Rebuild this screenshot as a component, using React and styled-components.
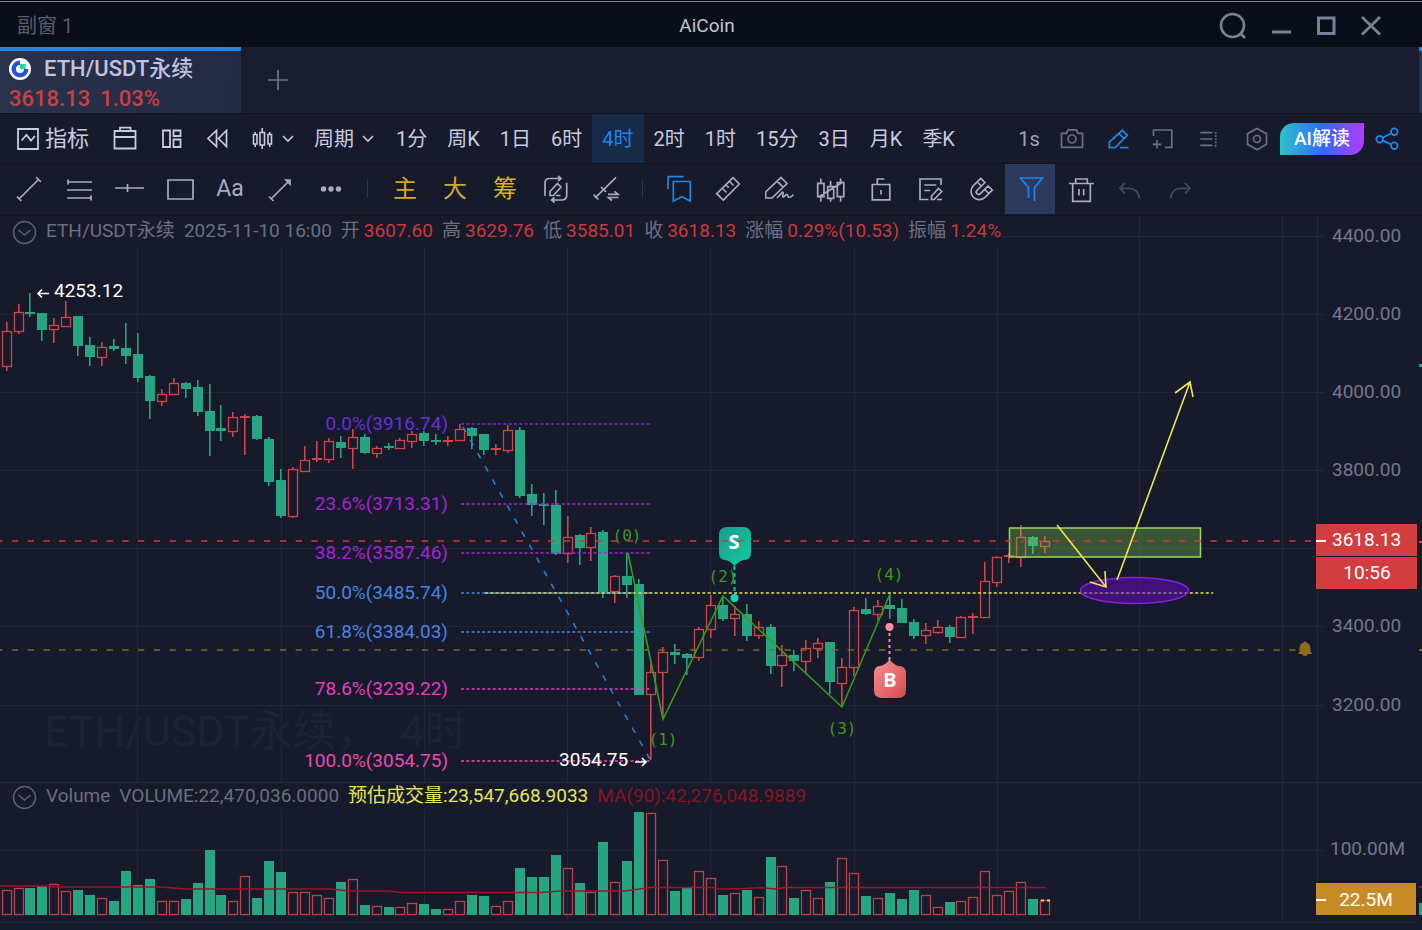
import React from 'react';
import styled, { createGlobalStyle } from 'styled-components';

const GlobalStyle = createGlobalStyle`
  * {
    box-sizing: border-box;
  }
  body {
    margin: 0;
    background: #171a2b;
    font-family: Roboto, "Noto Sans CJK SC", sans-serif;
  }
  button {
    font-family: inherit;
    line-height: 24px;
    border: 0;
    padding: 0;
    background: none;
    cursor: pointer;
  }
`;

const Page = styled.div`
  min-height: 100vh;
  background: #171a2b;
  color: #c9cbe0;
`;

const TitleBar = styled.header`
  display: grid;
  grid-template-columns: 1fr auto 1fr;
  align-items: center;
  height: 47px;
  padding: 4px 25px 0 17px;
  background: #0a0e19;
  border-top: 1px solid #000;
  box-shadow: inset 0 1px 0 #858896;
`;

const WindowName = styled.span`
  font-size: 20px;
  line-height: 24px;
  color: #5a5d6b;
`;

const AppName = styled.h1`
  margin: 0;
  font-size: 19px;
  line-height: 24px;
  font-weight: 400;
  color: #c3c5d4;
`;

const WindowButtons = styled.div`
  display: flex;
  justify-content: flex-end;
  margin-right: 4px;
`;

const WindowButton = styled.button`
  display: flex;
  align-items: center;
  justify-content: center;
  width: ${p => (p.$wide ? 50 : 45)}px;
  height: 40px;
  color: #7c7f98;
`;

const TabBar = styled.nav`
  display: flex;
  height: 66px;
  background: #191d2f;
`;

const Tab = styled.button`
  display: flex;
  flex-direction: column;
  justify-content: flex-end;
  gap: 2px;
  width: 241px;
  padding: 0 9px;
  border-top: 4px solid #1e86e5;
  background: linear-gradient(100deg, #29334b, #222a43);
  text-align: left;
`;

const TabName = styled.span`
  display: flex;
  align-items: center;
  gap: 13px;
  font-size: 22px;
  line-height: 28px;
  font-weight: 500;
  color: #c0c4e0;
`;

const TabQuote = styled.span`
  display: flex;
  gap: 10px;
  font-size: 22px;
  line-height: 28px;
  font-weight: 500;
  color: #c94045;
`;

const AddTab = styled.button`
  display: flex;
  align-items: center;
  justify-content: center;
  width: 74px;
  color: #6f7386;
`;

const NextWindow = styled.div`
  width: 3px;
  margin-left: auto;
  border-top: 4px solid #1e86e5;
  background: #263049;
`;

const Toolbar = styled.div`
  display: flex;
  height: ${p => p.$height}px;
  border-top: 1px solid #10131f;
  padding: ${p => p.$pad};
`;

const Tool = styled.button`
  display: flex;
  align-items: center;
  justify-content: center;
  flex: none;
  width: ${p => p.$width || 50}px;
  font-size: ${p => p.$size || 22}px;
  color: ${p => p.$color || '#a9acbd'};
  background: ${p => p.$bg || 'none'};
`;

const MenuTool = styled.button`
  display: flex;
  align-items: center;
  flex: none;
  gap: ${p => p.$gap}px;
  padding: ${p => p.$pad};
  font-size: ${p => p.$size || 20}px;
  color: #c9cbe0;
`;

const Period = styled.button`
  flex: none;
  padding: 0 10px;
  font-size: 20px;
  color: ${p => (p.$on ? '#1e86f0' : '#c9cbe0')};
  background: ${p => (p.$on ? '#172a47' : 'none')};
`;

const RightTools = styled.div`
  display: flex;
  align-items: stretch;
  margin-left: auto;
`;

const AiButton = styled.button`
  align-self: center;
  width: 84px;
  height: 32px;
  margin-left: 1px;
  border-radius: 14px 0;
  background: linear-gradient(90deg, #2cc3c8, #2f6bff 50%, #b13bff);
  font-size: 19px;
  font-weight: 500;
  color: #fff;
`;

const Divider = styled.span`
  width: 1px;
  height: 18px;
  margin: 0 12px;
  align-self: center;
  background: #2f3447;
`;

const Pane = styled.section`
  position: relative;
  display: flex;
  border-top: 1px solid ${p => p.$line};
`;

const Plot = styled.svg`
  display: block;
  flex: 1;
  min-width: 0;
`;

const Axis = styled.svg`
  display: block;
  flex: none;
  width: 106px;
  font-size: 19px;
`;

const Legend = styled.div`
  position: absolute;
  top: 0;
  left: 0;
  display: flex;
  align-items: center;
  gap: 9px;
  height: ${p => p.$height}px;
  padding-left: 12px;
  background: #171a2b;
  font-size: 19px;
  line-height: 24px;
  white-space: nowrap;
  color: #6b6f80;

  svg {
    margin-top: 2px;
  }
`;

const Quote = styled.span`
  display: flex;
  gap: 4px;
`;

const LegendValue = styled.span`
  color: ${p => p.$color || '#c9393e'};
`;

const Icon = ({ size = 30, x = 0, w = 2, children }) => (
  <svg
    width={size}
    height={size}
    viewBox={`${x} 0 ${size} ${size}`}
    fill="none"
    stroke="currentColor"
    strokeWidth={w}
    aria-hidden="true"
  >
    {children}
  </svg>
);

const Chevron = () => (
  <svg width="14" height="8" viewBox="0 0 14 8" fill="none" stroke="currentColor" strokeWidth="1.6" aria-hidden="true">
    <path d="M2 1l5 5 5-5" />
  </svg>
);

const Fold = () => (
  <svg width="25" height="25" viewBox="0 0 25 25" fill="none" stroke="#5c6071" strokeWidth="1.5" aria-hidden="true">
    <circle cx="12.5" cy="12.5" r="11" />
    <path d="M6.5 10l6 5 6-5" />
  </svg>
);

const EthLogo = () => (
  <svg width="22" height="22" viewBox="0 0 22 22" aria-hidden="true">
    <circle cx="11" cy="11" r="11" fill="#fff" />
    <path d="M11 2.5a8.5 8.5 0 1 0 8.5 8.5h-4.500a4 4 0 1 1-4-4z" fill="#2a4fd8" />
    <rect x="11" y="6" width="5.5" height="5" fill="#1fd6a0" />
  </svg>
);

const periods = ['1分', '周K', '1日', '6时', '4时', '2时', '1时', '15分', '3日', '月K', '季K'];

const drawTools = [
  { name: '线段', d: 'M5 25L25 5M3 22.7l4.3 4.3M22 3l5 5' },
  { name: '平行线', d: 'M3 8h25M3 16h25M3 24h25M4 5.5v5M27 21.5v5' },
  { name: '水平线', d: 'M1 14h29M13.5 10v8' },
  { name: '矩形', d: 'M4 6h25v19H4z' },
  { name: '文字', text: 'Aa', size: 23 },
  { name: '箭头', d: 'M7 25L25 7M5 22.5l4.5 4.5M22 6h4v4z' },
  { name: '更多', dots: true },
];

const markTools = [
  { name: '主', text: '主', color: '#d9a520', size: 24 },
  { name: '大', text: '大', color: '#c9a53c', size: 24 },
  { name: '筹', text: '筹', color: '#d6b41e', size: 24 },
  { name: '切换画线', d: 'M6 22V9q0-4.5 4.5-4.5H21M19 2l3 2.5-3 2.5M27.7 8.700V21q0 5-5 5H12.500M15.500 23.500l-3 2.500 3 2.500M11 21.500v-4l7.500-8 3.500 3.500-7.500 8.500zM17 21.500h4.500' },
  { name: '画线同步', d: 'M6 24L27 3.300M4.500 20.500l5 5M12 13l5 5M19 20.300h10l-3.500-3M29.500 23.500H19.500l3.500 3' },
];

const chartTools = [
  { name: '书签', d: 'M4 15.300V2.700h15.500M9.300 7.500h17V27l-8.500-4.300L9.300 27z', color: '#1e86e5' },
  { name: '测量', d: 'M19 3.700l6.300 6.300L9.300 26l-6.600-6.300zM15.500 7.500l4 4M12 11l2.700 2.700M8.500 14.500l4 4' },
  { name: '画笔', d: 'M17 3.500l6 6L8 24H1.700v-6zM13.300 7.300l6 6M13 24l5.500-6c2 0-1 4.500.5 5s2.500-3 4-2.500c1.300.5.6 3 2.300 3s2.200-1.500 4.200-2.700' },
  { name: 'K线形态', d: 'M3.700 9.300h6.300v13.400H3.700zM6.800 4.500v4.800M6.800 22.700v5M13.700 12.700h6v11.600h-6zM16.600 7v5.700M16.600 24.300v3.400M23.300 8.500h6.500v14.200h-6.500zM26.600 4.500v4M26.600 22.700v5M4.500 23L29 8' },
  { name: '锁定', d: 'M8.300 10.500h17.500v15.300H8.300zM13.300 10.500V5h7M17 16v4.500' },
  { name: '笔记', d: 'M27 11V5H6v20.500h8.500M10.300 11h12M10.300 16.500h6M17.500 25.500V22l7-7.500 3.200 3-7.500 8zM23 25.500h5' },
  { name: '磁吸', d: 'M16.700 4.300L9 12a8.300 8.300 0 0 0 11.700 11.700l7.600-7.500-4.200-4.200-7.700 7.700a2.400 2.400 0 0 1-3.400-3.400L20.900 8.500zM13.300 8l4 4M20.800 15.500l4 4' },
  { name: '筛选', d: 'M14.500 24V13.500L6.500 4h22l-8 9.500V27', color: '#1e86e5', bg: '#2c3a5e' },
  { name: '删除', d: 'M5 9.500h25M11.700 9.500V5h11.600v4.500M8.700 9.500v17.800h17.600V9.500M15 15v6.500M19.700 15v6.500' },
  { name: '撤销', d: 'M11 9l-5 5.300 5 5M6 14.300h9q9 0 10.500 10', color: '#454a5b' },
  { name: '重做', d: 'M21 9l5 5.300-5 5M26 14.300h-9q-9 0-10.500 10', color: '#454a5b' },
];

// [up, wick top, body top, body bottom, wick bottom, volume top]
const candles = [
  [1, 322, 331, 366, 371, 890], [1, 304, 312, 331, 334, 888], [0, 293, 312, 314, 317, 888],
  [0, 313, 313, 330, 341, 886], [1, 318, 325, 329, 343, 884], [1, 301, 317, 326, 326, 891],
  [0, 316, 316, 346, 356, 890], [0, 337, 345, 357, 366, 895], [1, 342, 347, 357, 366, 898],
  [0, 339, 346, 349, 351, 901], [0, 323, 348, 356, 364, 871], [0, 333, 354, 378, 382, 885],
  [0, 375, 376, 401, 419, 879], [1, 389, 394, 401, 406, 901], [1, 378, 383, 394, 394, 901],
  [0, 382, 383, 389, 398, 899], [0, 380, 387, 412, 416, 883], [0, 384, 411, 431, 456, 850],
  [0, 405, 428, 431, 441, 895], [1, 412, 417, 431, 437, 901], [1, 414, 416, 418, 455, 876],
  [0, 415, 416, 439, 440, 898], [0, 437, 439, 482, 486, 861], [0, 469, 480, 516, 518, 872],
  [1, 467, 469, 516, 518, 892], [1, 446, 460, 471, 472, 892], [1, 441, 458, 460, 462, 895],
  [1, 438, 441, 459, 463, 898], [0, 436, 442, 448, 458, 882], [1, 429, 437, 448, 469, 879],
  [0, 434, 437, 453, 454, 905], [1, 446, 448, 453, 458, 906], [0, 443, 446, 448, 450, 907],
  [1, 438, 440, 448, 448, 907], [1, 431, 434, 441, 448, 903], [0, 431, 433, 441, 446, 904],
  [0, 434, 440, 442, 445, 909], [1, 436, 440, 442, 446, 909], [1, 424, 429, 440, 440, 901],
  [0, 427, 428, 436, 449, 895], [0, 434, 434, 450, 455, 896], [1, 444, 448, 450, 455, 906],
  [1, 425, 430, 450, 453, 901], [0, 427, 430, 496, 498, 868], [0, 484, 494, 505, 516, 877],
  [0, 493, 504, 506, 525, 877], [0, 490, 505, 554, 555, 855], [1, 516, 537, 553, 563, 868],
  [0, 534, 535, 548, 565, 883], [1, 527, 533, 547, 561, 892], [0, 530, 532, 592, 598, 842],
  [1, 575, 576, 591, 603, 882], [0, 553, 576, 585, 598, 861], [0, 579, 584, 695, 695, 812],
  [1, 664, 672, 694, 760, 813], [1, 647, 652, 672, 718, 860], [0, 644, 652, 655, 664, 891],
  [0, 653, 654, 658, 675, 888], [1, 627, 629, 657, 661, 871], [1, 595, 605, 629, 638, 878],
  [0, 596, 605, 619, 621, 895], [1, 606, 614, 618, 636, 893], [0, 604, 614, 636, 641, 890],
  [1, 621, 627, 635, 639, 897], [0, 624, 627, 666, 674, 857], [1, 645, 655, 665, 687, 866],
  [0, 650, 655, 661, 671, 898], [1, 640, 648, 661, 673, 890], [1, 638, 643, 648, 658, 898],
  [0, 642, 642, 682, 694, 882], [1, 658, 667, 683, 707, 858], [1, 607, 610, 667, 676, 873],
  [0, 598, 609, 614, 615, 896], [1, 600, 606, 614, 620, 898], [0, 594, 605, 609, 619, 893],
  [0, 599, 608, 623, 623, 899], [0, 619, 622, 636, 639, 890], [1, 623, 630, 635, 644, 895],
  [1, 620, 627, 632, 634, 907], [0, 625, 627, 637, 643, 902], [1, 616, 617, 637, 638, 901],
  [1, 613, 616, 618, 634, 897], [1, 562, 581, 617, 617, 871], [1, 556, 557, 582, 587, 895],
  [1, 553, 555, 557, 563, 891], [1, 525, 537, 557, 567, 882], [0, 536, 537, 546, 554, 899],
  [1, 536, 541, 546, 553, 900],
];

const candleX = i => Math.round(6.6 + i * 11.936);
const RED = '#cf4448';
const GREEN = '#25a582';

const gridX = [137, 281, 424, 567, 710, 854, 997, 1139, 1282];
const prices = [
  ['4400.00', 236], ['4200.00', 314], ['4000.00', 392], ['3800.00', 470],
  ['', 548], ['3400.00', 626], ['3200.00', 705],
];

const fibs = [
  ['0.0%(3916.74)', 424, '#6430dc'],
  ['23.6%(3713.31)', 504, '#a423d8'],
  ['38.2%(3587.46)', 553, '#a423d8'],
  ['50.0%(3485.74)', 593, '#4186e0'],
  ['61.8%(3384.03)', 632, '#4a82e6'],
  ['78.6%(3239.22)', 689, '#e23fc0'],
  ['100.0%(3054.75)', 761, '#e84bb4'],
];

const waves = [['(0)', 627, 541], ['(1)', 663, 745], ['(2)', 723, 582], ['(3)', 842, 734], ['(4)', 889, 580]];

const Grid = ({ ys, height }) => (
  <g stroke="#212538" shapeRendering="crispEdges">
    {gridX.map(x => <line key={x} x1={x} x2={x} y1="0" y2={height} />)}
    {ys.map(y => <line key={y} x1="0" x2="100%" y1={y} y2={y} />)}
  </g>
);

function Candle({ x, bar }) {
  const [up, high, top, bottom, low] = bar;
  const color = up ? RED : GREEN;
  const thin = bottom - top < 4;
  return (
    <g fill={color}>
      <rect x={x - 1} y={high} width="1.6" height={top - high} />
      <rect x={x - 1} y={bottom} width="1.6" height={low - bottom} />
      {up && !thin ? (
        <rect x={x - 4.5} y={top + 0.5} width="9" height={bottom - top} fill="none" stroke={color} strokeWidth="1.3" />
      ) : (
        <rect x={x - 5} y={top} width="10" height={bottom - top} />
      )}
    </g>
  );
}

function PricePane() {
  return (
    <Pane $line="#10131f">
      <Plot height="566">
        <defs>
          <linearGradient id="sell" x1="0" y1="0" x2="1" y2="1">
            <stop offset="0" stopColor="#1a9c8c" />
            <stop offset="1" stopColor="#12cba4" />
          </linearGradient>
          <linearGradient id="buy" x1="0" y1="0" x2="1" y2="1">
            <stop offset="0" stopColor="#f49090" />
            <stop offset="1" stopColor="#d84a50" />
          </linearGradient>
        </defs>
        <g transform="translate(0 -216)">
          <Grid ys={prices.map(p => p[1])} height="782" />
          <text x="44" y="746" fontSize="43" fill="#1c2134" style={{ whiteSpace: 'pre' }}>ETH/USDT永续，  4时</text>
          {fibs.map(([label, y, color]) => (
            <text key={label} x="448" y={y + 6} fontSize="19" textAnchor="end" fill={color}>{label}</text>
          ))}
          {candles.map((bar, i) => <Candle key={i} x={candleX(i)} bar={bar} />)}
          {fibs.map(([label, y, color]) => (
            <line key={label} x1="461" x2="652" y1={y} y2={y} stroke={color} strokeWidth="1.5" strokeDasharray="3 2.3" />
          ))}
          <line x1="463" y1="427" x2="651" y2="761" stroke="#2186e0" strokeWidth="1.5" strokeDasharray="6 9" />
          <line x1="485" x2="1213" y1="593" y2="593" stroke="#e6e65a" strokeWidth="1.7" strokeDasharray="3 2.3" />

          <path d="M628 553L663 719L723 596L842 707L890 594" fill="none" stroke="#3a9a1c" strokeWidth="1.6" />
          <g fontFamily='"DejaVu Sans Mono", monospace' fontSize="16" fill="#3a9a1c" textAnchor="middle">
            {waves.map(([label, x, y]) => <text key={label} x={x} y={y}>{label}</text>)}
          </g>

          <path d="M734.5 566v32" stroke="#15c4a6" strokeWidth="2" strokeDasharray="4 3" />
          <circle cx="734.5" cy="598" r="4" fill="#10d6c2" />
          <path d="M727 527h16q8 0 8 8v17q0 8-7 8-4 0-9.5 6-5-6-9.5-6-6 0-6-8v-17q0-8 8-8z" fill="url(#sell)" />
          <path d="M889.5 627v34" stroke="#f490a4" strokeWidth="2" strokeDasharray="3 3" />
          <circle cx="889.5" cy="627" r="4" fill="#f78fa4" />
          <path d="M882 698h16q8 0 8-8v-16q0-8-7-8-4 0-9.5-6.5-5 6.5-9.5 6.5-6 0-6 8v16q0 8 8 8z" fill="url(#buy)" />

          <rect x="1009.5" y="528" width="191" height="29" fill="#82cd50" fillOpacity="0.33" stroke="#9ed45c" strokeWidth="1.5" />
          <ellipse cx="1134.5" cy="590.5" rx="54" ry="13" fill="#6a0ac8" fillOpacity="0.5" stroke="#8420e0" strokeWidth="1.5" />
          <line x1="-4" x2="100%" y1="541" y2="541" stroke="#c93a3c" strokeWidth="1.5" strokeDasharray="6.4 9.37" />
          <line x1="-4" x2="1297" y1="650" y2="650" stroke="#80681f" strokeWidth="1.5" strokeDasharray="6.4 9.37" />
          <path d="M1305 641l1.500 1.500q4 1.500 4 6v3l1.500 2.500h-4q-.5 2-3 2t-3-2h-4l1.500-2.500v-3q0-4.500 4-6z" fill="#8e6b1e" />

          <g fill="none" stroke="#ece64e" strokeWidth="1.6">
            <path d="M1057 525L1106 587M1090 582l16 5-1-16" />
            <path d="M1117 580L1190 382M1175 393l15-11 3 15" />
          </g>

          <g fill="#fff" fontSize="19">
            <text x="54" y="297">4253.12</text>
            <text x="559" y="766">3054.75</text>
          </g>
          <path d="M49 293.5H38M42 289.5l-4 4 4 4M635 762h11M642 758l4 4-4 4" fill="none" stroke="#fff" strokeWidth="1.6" />
          <g fill="#fff" fontFamily='"Noto Sans", sans-serif' fontSize="20" fontWeight="700" textAnchor="middle">
            <text x="734" y="549">S</text>
            <text x="890" y="687">B</text>
          </g>
        </g>
      </Plot>
      <Axis height="566">
        <line x1="1" x2="1" y1="0" y2="566" stroke="#212538" shapeRendering="crispEdges" />
        <g transform="translate(0 -216)">
          {prices.map(([label, y]) => (
            <g key={y}>
              <line x1="0" x2="8" y1={y} y2={y} stroke="#212538" shapeRendering="crispEdges" />
              <text x="16" y={y + 6} fill="#73778c">{label}</text>
            </g>
          ))}
          <rect y="524" width="101" height="32" fill="#d23e40" />
          <rect y="557" width="101" height="32" fill="#d23e40" />
          <rect y="540" width="10" height="2" fill="#fff" />
          <text x="16" y="546" fill="#fff">3618.13</text>
          <text x="51" y="579" fill="#fff" textAnchor="middle">10:56</text>
          <rect x="103" y="364" width="3" height="3" fill={GREEN} />
          <rect x="103" y="541" width="3" height="2" fill={RED} />
          <rect x="103" y="649" width="3" height="2" fill="#80681f" />
        </g>
      </Axis>
      <Legend $height={30}>
        <Fold />
        <span>ETH/USDT永续</span>
        <span>2025-11-10 16:00</span>
        <Quote>开<LegendValue>3607.60</LegendValue></Quote>
        <Quote>高<LegendValue>3629.76</LegendValue></Quote>
        <Quote>低<LegendValue>3585.01</LegendValue></Quote>
        <Quote>收<LegendValue>3618.13</LegendValue></Quote>
        <Quote>涨幅<LegendValue>0.29%(10.53)</LegendValue></Quote>
        <Quote>振幅<LegendValue>1.24%</LegendValue></Quote>
      </Legend>
    </Pane>
  );
}

function VolumePane() {
  return (
    <Pane $line="#23283a">
      <Plot height="147">
        <g transform="translate(0 -783)">
          <Grid ys={[850, 922]} height="922" />
          {candles.map(([up, , , , , top], i) => {
            const x = candleX(i) - 5;
            return up ? (
              <rect key={i} x={x + 0.5} y={top + 0.5} width="9" height={914 - top} fill="none" stroke="#bd4247" strokeWidth="1.3" />
            ) : (
              <rect key={i} x={x} y={top} width="10" height={915 - top} fill={GREEN} />
            );
          })}
          <path d="M1041 900.5h3M1047 900.5h3" stroke="#f0d070" strokeWidth="2" />
          <path
            d="M0 886H42L58 887H160L185 889H330L350 891H388L402 892.5H540L560 891H625L650 887.5H712L720 889L745 888.5L760 887.5L775 889L785 887.5H1046"
            fill="none"
            stroke="#9c1524"
            strokeWidth="1.6"
          />
        </g>
      </Plot>
      <Axis height="147">
        <line x1="1" x2="1" y1="0" y2="139" stroke="#212538" shapeRendering="crispEdges" />
        <line x1="0" x2="101" y1="139" y2="139" stroke="#212538" shapeRendering="crispEdges" />
        <g transform="translate(0 -783)">
          <line x1="0" x2="8" y1="850" y2="850" stroke="#212538" shapeRendering="crispEdges" />
          <text x="14" y="855" fill="#73778c">100.00M</text>
          <rect y="883" width="100" height="32" fill="#c78b26" />
          <rect y="899" width="10" height="2" fill="#fff" />
          <text x="50" y="906" fill="#fff" textAnchor="middle">22.5M</text>
          <rect x="103" y="886" width="3" height="2" fill="#9c1524" />
          <rect x="103" y="903" width="3" height="12" fill={GREEN} />
        </g>
      </Axis>
      <Legend $height={26}>
        <Fold />
        <span>Volume</span>
        <span>VOLUME:22,470,036.0000</span>
        <LegendValue $color="#e6e65a">预估成交量:23,547,668.9033</LegendValue>
        <LegendValue $color="#861423">MA(90):42,276,048.9889</LegendValue>
      </Legend>
    </Pane>
  );
}

const ToolButton = ({ tool }) => (
  <Tool $color={tool.color} $bg={tool.bg} $size={tool.size} aria-label={tool.name}>
    {tool.text}
    {tool.d && <Icon x={1} w={1.7}><path d={tool.d} /></Icon>}
    {tool.dots && (
      <Icon x={1}>
        <g fill="currentColor" stroke="none">
          <circle cx="9.5" cy="15" r="2.7" />
          <circle cx="17" cy="15" r="2.7" />
          <circle cx="24.5" cy="15" r="2.7" />
        </g>
      </Icon>
    )}
  </Tool>
);

export default function App() {
  return (
    <Page>
      <GlobalStyle />
      <TitleBar>
        <WindowName>副窗 1</WindowName>
        <AppName>AiCoin</AppName>
        <WindowButtons>
          <WindowButton $wide aria-label="搜索">
            <Icon w={2.6}><circle cx="14.5" cy="14.5" r="11.5" /><path d="M22 22l5 5" /></Icon>
          </WindowButton>
          <WindowButton aria-label="最小化"><Icon w={3}><path d="M6 21h19" /></Icon></WindowButton>
          <WindowButton aria-label="最大化"><Icon w={3}><path d="M7.5 7h15.5v15.500H7.500z" /></Icon></WindowButton>
          <WindowButton aria-label="关闭"><Icon w={2.8}><path d="M6 6l18 17.500M24 6L6 23.500" /></Icon></WindowButton>
        </WindowButtons>
      </TitleBar>

      <TabBar>
        <Tab>
          <TabName><EthLogo />ETH/USDT永续</TabName>
          <TabQuote><span>3618.13</span><span>1.03%</span></TabQuote>
        </Tab>
        <AddTab aria-label="新建标签"><Icon size={20} w={1.7}><path d="M10 0v20M0 10h20" /></Icon></AddTab>
        <NextWindow />
      </TabBar>

      <Toolbar $height={50} $pad="0 12px 0 0">
        <MenuTool $gap={6} $pad="0 13px 0 17px" $size={22}>
          <Icon size={22} w={1.8}><path d="M1 1h20v20H1zM4.500 12.500l5-5.500 4.500 5.500 4-4.500" /></Icon>
          指标
        </MenuTool>
        <Tool $width={46} $color="#c9cbe0" aria-label="模板">
          <Icon w={1.8}><path d="M4.500 7h21v17.500h-21zM4.500 13h21M10 7V3.700h10.500V7" /></Icon>
        </Tool>
        <Tool $width={46} $color="#c9cbe0" aria-label="布局">
          <Icon w={1.8}><path d="M7 6.500h7v16.500H7zM17.500 6.500h7v5.500h-7zM17.500 15.500h7V23h-7z" /></Icon>
        </Tool>
        <Tool $width={46} $color="#c9cbe0" aria-label="回放">
          <Icon w={1.7}><path d="M14.500 6.500v16L6 14.500zM24.500 6.500v16L16.500 14.500z" /></Icon>
        </Tool>
        <MenuTool $gap={8} $pad="0 9px 0 11px" aria-label="图表类型">
          <Icon size={22} w={1.6}>
            <path d="M2.500 6.500h3.500v9.500H2.500zM4.200 4v2.500M4.200 16v3M9 4.500h4.500V17H9zM11.200 0v4.500M11.200 17v4M17 6.500h3.500v9.500H17zM18.700 4v2.500M18.700 16v3" />
          </Icon>
          <Chevron />
        </MenuTool>
        <MenuTool $gap={7} $pad="0 11px 0 10px">周期<Chevron /></MenuTool>
        {periods.map(p => <Period key={p} $on={p === '4时'}>{p}</Period>)}
        <RightTools>
          <Tool $width={40} $size={20} $color="#a0a3b4">1s</Tool>
          <Tool $width={46} $color="#6d7083" aria-label="截图">
            <Icon w={1.7}><path d="M4.500 9.300h5l1.500-3.500h8.500L21 9.300h4.500v14h-21z" /><circle cx="15" cy="15" r="4" /></Icon>
          </Tool>
          <Tool $width={46} $color="#1e86e5" aria-label="画线">
            <Icon w={1.8}><path d="M19.300 6.300l5 5L12 23.700H6.300v-5.500zM16 9.700l5 5M17 23.700h8.500" /></Icon>
          </Tool>
          <Tool $width={46} $color="#6d7083" aria-label="添加窗口">
            <Icon w={1.7}><path d="M4.500 12V6h18.300v17.300H16M8 16v8.500M3.800 20.300h8.500" /></Icon>
          </Tool>
          <Tool $width={46} $color="#6d7083" aria-label="列表">
            <Icon w={1.7}>
              <path d="M5.300 8.700h12M5.300 15h12M5.300 21.300h12" />
              <path d="M20.700 8v14.500" strokeDasharray="1.700 1.500" />
            </Icon>
          </Tool>
          <Tool $width={46} $color="#6d7083" aria-label="设置">
            <Icon w={1.7}><path d="M16 4.500l9.500 5.300v10.500L16 25.700l-9.500-5.400V9.800z" /><circle cx="16" cy="15" r="3.500" /></Icon>
          </Tool>
          <AiButton>AI解读</AiButton>
          <Tool $width={46} $color="#1e86e5" aria-label="分享">
            <Icon w={1.8}>
              <circle cx="22.3" cy="7.7" r="3.3" />
              <circle cx="22.3" cy="21.7" r="3.3" />
              <circle cx="7.7" cy="15.3" r="3.3" />
              <path d="M10.700 13.800l8.600-4.500M10.700 16.700l8.600 3.700" />
            </Icon>
          </Tool>
        </RightTools>
      </Toolbar>

      <Toolbar $height={52} $pad="0 5px 1px">
        {drawTools.map(t => <ToolButton key={t.name} tool={t} />)}
        <Divider />
        {markTools.map(t => <ToolButton key={t.name} tool={t} />)}
        <Divider />
        {chartTools.map(t => <ToolButton key={t.name} tool={t} />)}
      </Toolbar>

      <PricePane />
      <VolumePane />
    </Page>
  );
}
